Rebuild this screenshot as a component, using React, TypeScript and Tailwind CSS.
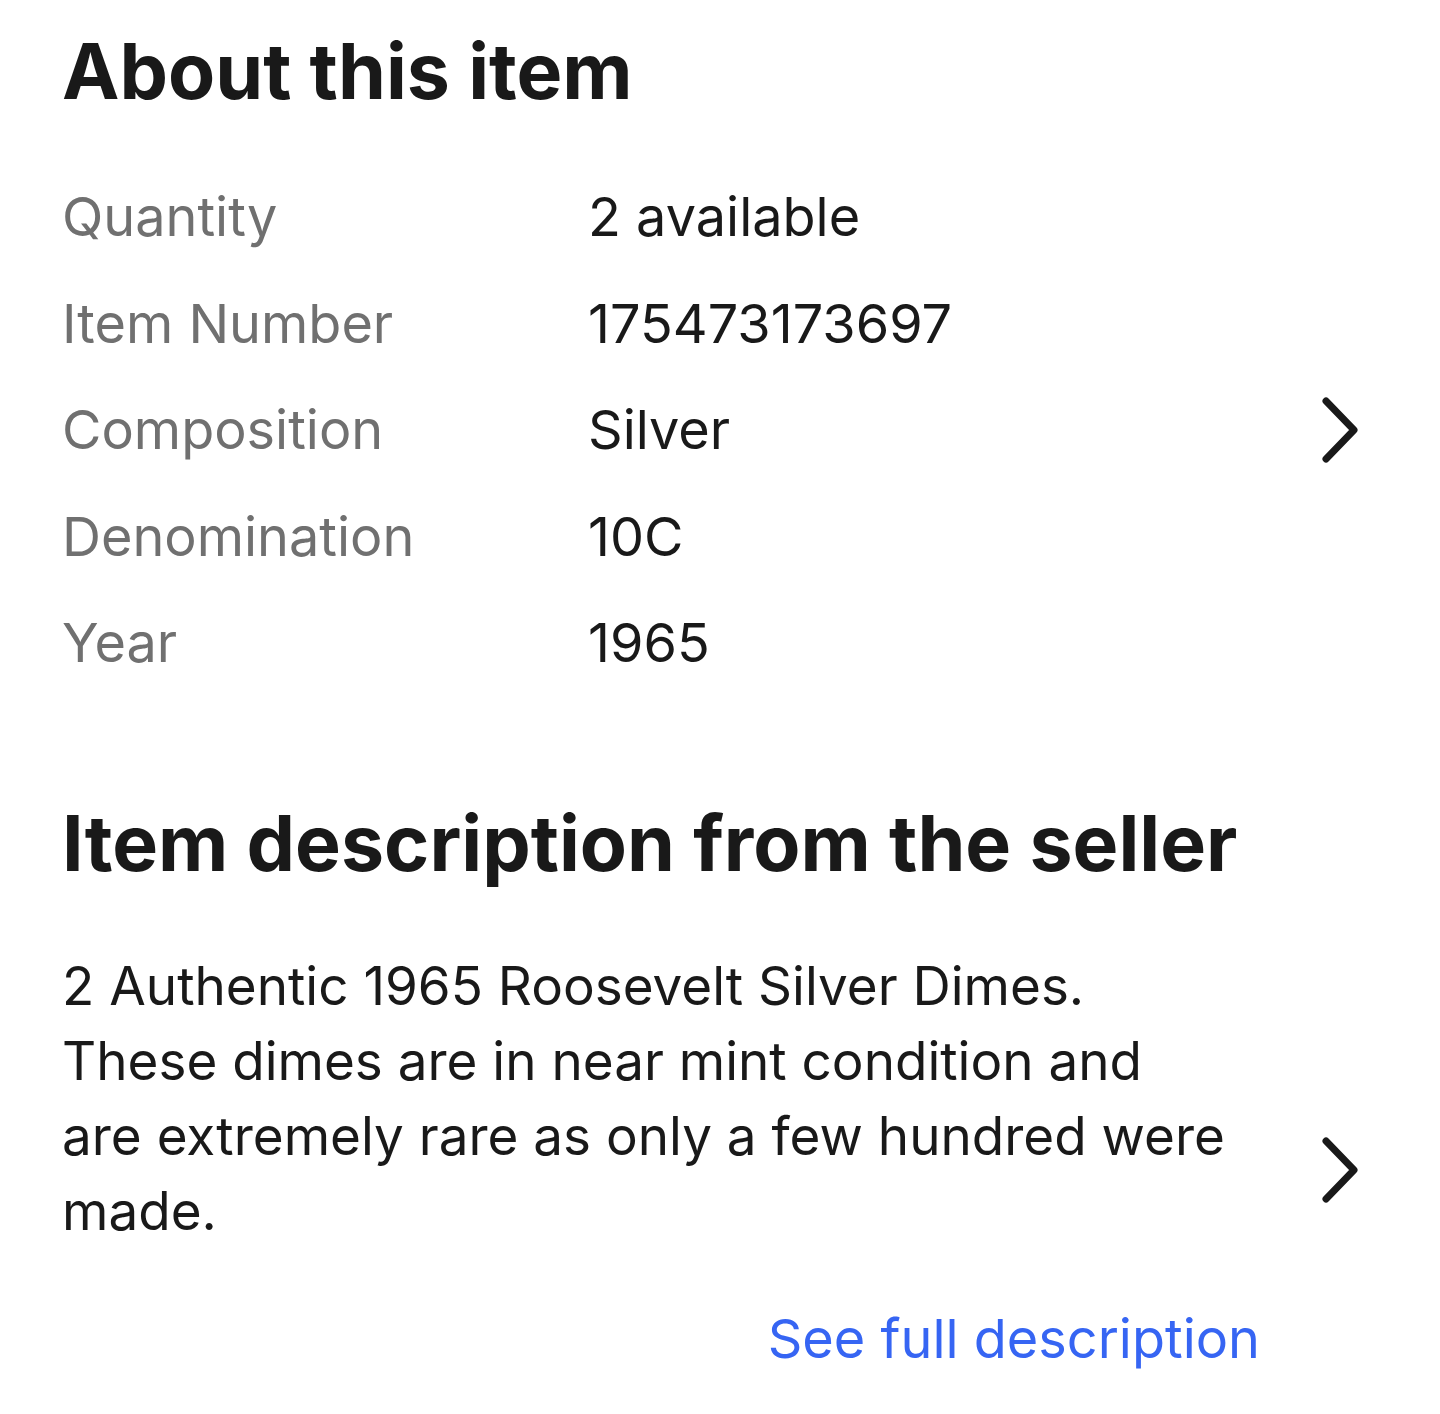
import React from "react";

const Chevron = ({ className = "" }: { className?: string }) => (
  <svg width="40" height="70" viewBox="0 0 40 70" fill="none" className={"shrink-0 " + className}>
    <path d="M6 6 L34 35 L6 64" stroke="#191919" strokeWidth="7" strokeLinecap="round" strokeLinejoin="round" />
  </svg>
);

const rows: [string, string][] = [
  ["Quantity", "2 available"],
  ["Item Number", "175473173697"],
  ["Composition", "Silver"],
  ["Denomination", "10C"],
  ["Year", "1965"],
];

export default function App() {
  return (
    <div
      className="w-[1440px] h-[1414px] bg-white text-[#191919] overflow-hidden"
      style={{ fontFamily: "Inter, 'Noto Sans', sans-serif" }}
    >
      <div className="pl-[62px] pr-[80px] pt-[26px]">
        <h2 className="text-[77px] font-bold leading-[90px]">About this item</h2>
        <div className="flex items-center mt-[48px]">
          <div className="flex-1 flex flex-col">
            {rows.map(([k, v]) => (
              <div key={k} className="flex h-[106.5px] items-center text-[54px] leading-[64px]">
                <div className="w-[526px] text-[#707070]">{k}</div>
                <div>{v}</div>
              </div>
            ))}
          </div>
          <Chevron />
        </div>

        <h2 className="mt-[101px] text-[77px] font-bold leading-[90px]">
          Item description from the seller
        </h2>
        <div className="flex items-center mt-[61px]">
          <div className="flex-1">
            <p className="text-[53px] leading-[75px] w-[1170px]">
              2 Authentic 1965 Roosevelt Silver Dimes. These dimes are in near mint condition and are extremely rare as only a few hundred were made.
            </p>
            <div className="flex justify-end pr-[60px] mt-[58px]">
              <span className="text-[54px] leading-[64px] text-[#3665f3]">See full description</span>
            </div>
          </div>
          <Chevron className="mt-[20px]" />
        </div>
      </div>
    </div>
  );
}
